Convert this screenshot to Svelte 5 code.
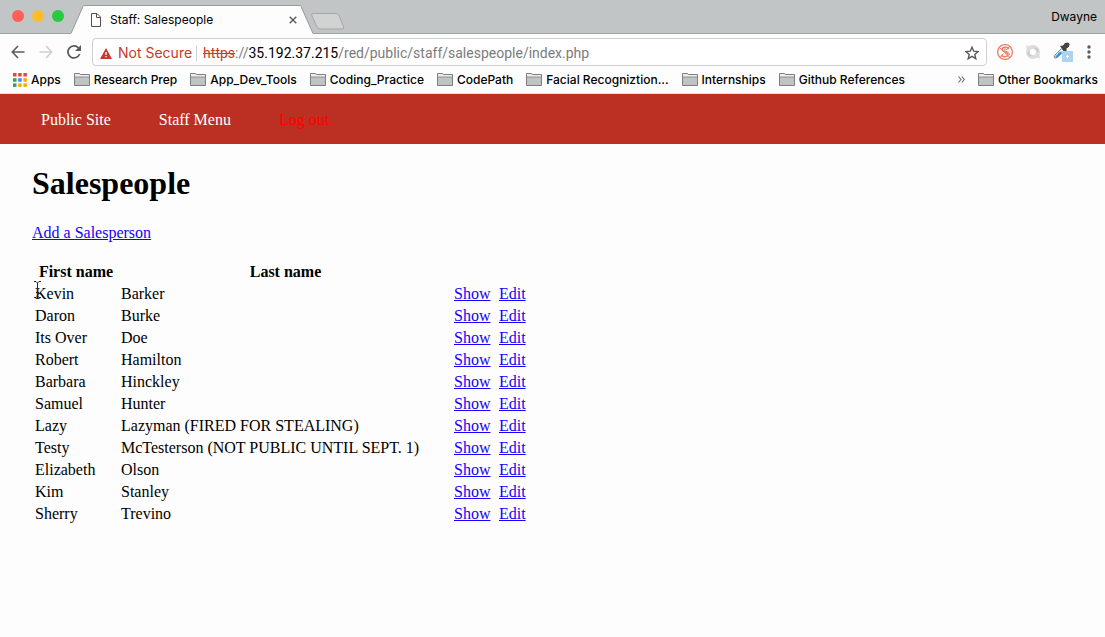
<script>
  const bookmarks = [
    'Research Prep',
    'App_Dev_Tools',
    'Coding_Practice',
    'CodePath',
    'Facial Recogniztion...',
    'Internships',
    'Github References',
  ];

  const people = [
    ['Kevin', 'Barker'],
    ['Daron', 'Burke'],
    ['Its Over', 'Doe'],
    ['Robert', 'Hamilton'],
    ['Barbara', 'Hinckley'],
    ['Samuel', 'Hunter'],
    ['Lazy', 'Lazyman (FIRED FOR STEALING)'],
    ['Testy', 'McTesterson (NOT PUBLIC UNTIL SEPT. 1)'],
    ['Elizabeth', 'Olson'],
    ['Kim', 'Stanley'],
    ['Sherry', 'Trevino'],
  ];

  const appColors = [
    '#e8453c', '#e8453c', '#e8453c',
    '#2fa35c', '#3f87f5', '#f5a90c',
    '#2fa35c', '#f5a90c', '#f5a90c',
  ];
</script>

{#snippet folder()}
  <svg class="folder" width="16" height="13" viewBox="0 0 16 13" aria-hidden="true">
    <path d="M.5 12.5V.5H5.5L6.5 1.5H15.5V12.5Z" fill="#c0c3c3" stroke="#7d7f7f" />
    <path d="M1 1.5H5.5M1 2.5H15" stroke="#ededed" />
    <path d="M1 4.5H15" stroke="#a5a8a8" />
  </svg>
{/snippet}

<div class="window">
  <header class="titlebar">
    <div class="lights">
      <button class="light close" aria-label="Close window"></button>
      <button class="light minimise" aria-label="Minimise window"></button>
      <button class="light expand" aria-label="Expand window"></button>
    </div>
    <div class="tab">
      <svg class="tab-shape" viewBox="0 0 244 29" preserveAspectRatio="none" aria-hidden="true">
        <path d="M0 28.5L12 1.5Q12.5 .5 14 .5H228Q229.5 .5 230 1.5L242 28.5V29H0Z" fill="#fdfdfd" />
        <path d="M0 28.5L12 1.5Q12.5 .5 14 .5H228Q229.5 .5 230 1.5L242 28.5" fill="none" stroke="#989a9a" />
      </svg>
      <svg width="10" height="14" viewBox="0 0 10 14" fill="none" stroke="#505050" aria-hidden="true">
        <path d="M.5 .5H6L9.5 4V13.5H.5ZM5.5 .5V4.5H9.5" />
      </svg>
      <span class="tab-title">Staff: Salespeople</span>
      <button class="plain" aria-label="Close tab">
        <svg width="8" height="8" viewBox="0 0 8 8" stroke="#555" stroke-width="1.3"><path d="M.7 .7 7.3 7.3M7.3 .7 .7 7.3" /></svg>
      </button>
    </div>
    <button class="plain new-tab" aria-label="New tab">
      <svg width="34" height="17" viewBox="0 0 34 17"><path d="M2 .5H25Q27 .5 28 2.5L32.5 13.5Q33.5 16 31 16H9Q7 16 6 14L.8 2.5Q0 .5 2 .5Z" fill="#d1d3d3" stroke="#a5a7a7" /></svg>
    </button>
    <button class="plain profile">Dwayne</button>
  </header>

  <div class="toolbar">
    <button class="plain" aria-label="Back">
      <svg width="14" height="14" viewBox="0 0 14 14" fill="none" stroke="#5a5a5a" stroke-width="1.6"><path d="M13.5 7H1.5M7 1 1.3 7 7 13" /></svg>
    </button>
    <button class="plain" aria-label="Forward">
      <svg width="14" height="14" viewBox="0 0 14 14" fill="none" stroke="#d0d0d0" stroke-width="1.6"><path d="M.5 7H12.5M7 1 12.7 7 7 13" /></svg>
    </button>
    <button class="plain" aria-label="Reload">
      <svg width="14" height="14" viewBox="0 0 14 14"><path d="M12.6 9A6 6 0 1 1 11.5 3" fill="none" stroke="#5a5a5a" stroke-width="1.7" /><path d="M14 0V6H8Z" fill="#5a5a5a" /></svg>
    </button>
    <div class="address">
      <svg width="12" height="11" viewBox="0 0 12 11" aria-hidden="true"><path d="M6 0 12 11H0Z" fill="#c53929" /><path d="M6 4V7M6 8V9.2" stroke="#fff" stroke-width="1.3" /></svg>
      <span class="warning">Not Secure</span>
      <span class="url"><s>https</s>://<b>35.192.37.215</b>/red/public/staff/salespeople/index.php</span>
      <button class="plain" aria-label="Bookmark this page">
        <svg width="14" height="14" viewBox="0 0 14 14"><path d="M7 1.2 8.7 5.2 13 5.6 9.8 8.4 10.8 12.7 7 10.4 3.2 12.7 4.2 8.4 1 5.6 5.3 5.2Z" fill="none" stroke="#5a5a5a" stroke-width="1.4" /></svg>
      </button>
    </div>
    <div class="extensions">
      <button class="plain" aria-label="Script blocker">
        <svg width="16" height="16" viewBox="0 0 16 16" fill="none" stroke="#ec8067"><circle cx="8" cy="8" r="7.4" stroke-width="1.3" /><path d="M11.8 5C11 2.8 5 2.5 5 5.2S11 8 11 10.5 6 13.5 4.2 11" stroke-width="1.5" /><path d="M9.8 5.5C9 4.5 7 4.5 7 5.7S13 8 12.5 11M2.5 3.5 13 13.5M12.5 2.5 9.5 6M6.5 9.5 3 13.5" stroke-width="1" /></svg>
      </button>
      <button class="plain" aria-label="Sync extension">
        <svg width="16" height="16" viewBox="0 0 16 16" fill="none"><circle cx="8" cy="8" r="5" stroke="#dcdcdc" stroke-width="4" /><path d="M1 1.5 2 7 6 3ZM15 14.5 14 9 10 13Z" fill="#dcdcdc" /><path d="M9.5 4Q13 4.5 12.5 8M6.5 12Q3 11.5 3.5 8" stroke="#c2c2c2" stroke-width="1.2" /></svg>
      </button>
      <button class="plain" aria-label="Color picker">
        <svg width="20" height="20" viewBox="0 0 20 20"><path d="M2 13 8.5 6.5 11 9 4.5 15.3Q2 17 1 15.5Z" fill="#d8eefb" stroke="#83919a" /><path d="M2 15 7 9.5 9 11 4 15.8Z" fill="#3194d8" /><path d="M7 4 10 3.5 12 1Q16 -.5 16.5 2 17 5 13.5 6.5L13.5 9.5 11.5 10Z" fill="#414345" /><rect x="9" y="9" width="11" height="11" fill="#aed3f1" /><path d="M14.5 13V16M13 14.5H16" stroke="#fff" /></svg>
      </button>
    </div>
    <button class="plain" aria-label="Browser menu">
      <svg width="4" height="14" viewBox="0 0 4 14" fill="#5a5a5a"><circle cx="2" cy="2" r="1.7" /><circle cx="2" cy="7" r="1.7" /><circle cx="2" cy="12" r="1.7" /></svg>
    </button>
  </div>

  <nav class="bookmarks" aria-label="Bookmarks">
    <button class="plain bookmark">
      <svg width="14" height="14" viewBox="0 0 14 14" aria-hidden="true">
        {#each appColors as color, i}
          <rect x={(i % 3) * 5.2} y={Math.floor(i / 3) * 5.2} width="3.5" height="3.5" fill={color} />
        {/each}
      </svg>
      Apps
    </button>
    {#each bookmarks as name}
      <button class="plain bookmark">{@render folder()}{name}</button>
    {/each}
    <button class="plain more" aria-label="More bookmarks">
      <svg width="7" height="7" viewBox="0 0 7 7" fill="none" stroke="#666" stroke-width="1.1"><path d="M.5 .5 3 3.5 .5 6.5M3.8 .5 6.3 3.5 3.8 6.5" /></svg>
    </button>
    <button class="plain bookmark">{@render folder()}Other Bookmarks</button>
  </nav>

  <nav class="site-nav" aria-label="Staff area">
    <a href="#public">Public Site</a>
    <a href="#menu">Staff Menu</a>
    <a class="logout" href="#logout">Log out</a>
  </nav>

  <main>
    <h1>Salespeople</h1>
    <a href="#new">Add a Salesperson</a>
    <table>
      <colgroup><col class="first" /><col class="last" /><col class="show" /><col class="edit" /></colgroup>
      <thead>
        <tr><th>First name</th><th>Last name</th><th></th><th></th></tr>
      </thead>
      <tbody>
        {#each people as [first, last]}
          <tr>
            <td>{first}</td>
            <td>{last}</td>
            <td><a href="#show">Show</a></td>
            <td><a href="#edit">Edit</a></td>
          </tr>
        {/each}
      </tbody>
    </table>
    <svg class="pointer" width="7" height="17" viewBox="0 0 7 17" fill="none" stroke="#222" aria-hidden="true"><path d="M0 .5H2L3.5 2 5 .5H7M3.5 2V15M0 16.5H2L3.5 15 5 16.5H7M2 11.5H5" /></svg>
  </main>
</div>

<style>
  :global(body) {
    margin: 0;
    background: #fdfdfd;
  }
  .window {
    min-height: 100vh;
    background: #fdfdfd;
    color: #000;
    font: 16px/18px "Liberation Serif", serif;
  }
  .plain {
    display: flex;
    align-items: center;
    padding: 0;
    border: 0;
    background: none;
    color: inherit;
    font: inherit;
    white-space: nowrap;
  }
  svg {
    display: block;
    flex: none;
  }
  .titlebar,
  .toolbar,
  .bookmarks {
    display: flex;
    box-sizing: border-box;
    font: 12px/16px Inter, sans-serif;
  }
  .titlebar {
    height: 34px;
    padding: 0 8px 0 12px;
    border-bottom: 1px solid #a0a2a2;
    background: #c1c5c5;
  }
  .lights {
    display: flex;
    gap: 8px;
    padding: 10px 2px 0 0;
  }
  .light {
    width: 12px;
    height: 12px;
    padding: 0;
    border: 0;
    border-radius: 50%;
  }
  .close { background: #ff5f57; }
  .minimise { background: #ffbd2e; }
  .expand { background: #28ca41; }
  .tab {
    position: relative;
    display: flex;
    align-items: center;
    box-sizing: border-box;
    width: 244px;
    height: 29px;
    margin: 5px 0 0 5px;
    padding: 0 18px 0 20px;
    gap: 9px;
  }
  .tab > :not(.tab-shape) {
    position: relative;
  }
  .tab > .tab-shape {
    position: absolute;
    inset: 0;
    width: 100%;
    height: 100%;
  }
  .tab-title {
    flex: 1;
  }
  .new-tab {
    align-self: flex-start;
    margin: 13px 0 0 -4px;
  }
  .profile {
    margin-left: auto;
  }
  .toolbar {
    align-items: center;
    gap: 14px;
    height: 36px;
    padding: 0 14px 0 11px;
  }
  .address {
    display: flex;
    flex: 1;
    align-items: center;
    box-sizing: border-box;
    height: 28px;
    margin: 0 -4px 0 -3px;
    padding: 2px 7px 0;
    border: 1px solid #cfcfcf;
    border-radius: 4px;
    background: #fff;
    font-size: 14px;
  }
  .warning {
    margin: 0 6px;
    padding-right: 4px;
    border-right: 1px solid #cfcfcf;
    color: #c53929;
  }
  .url {
    flex: 1;
    color: #7b7b7b;
    font-family: Roboto, sans-serif;
  }
  .url s { color: #c53929; }
  .url b {
    color: #000;
    font-weight: 400;
  }
  .extensions {
    display: flex;
    gap: 12px;
  }
  .bookmarks {
    align-items: center;
    gap: 13px;
    height: 24px;
    padding: 0 7px 4px 13px;
    border-bottom: 1px solid #dedede;
    font-weight: 500;
  }
  .bookmark {
    gap: 4px;
  }
  .more {
    margin-left: auto;
  }
  .site-nav {
    display: flex;
    align-items: center;
    gap: 48px;
    height: 50px;
    padding: 0 41px;
    background: #bb3022;
    line-height: 20px;
  }
  .site-nav a {
    padding-top: 2px;
    color: #fff;
    text-decoration: none;
  }
  .site-nav .logout { color: #f00; }
  main {
    position: relative;
    padding: 21px 32px;
  }
  main a { color: #1500ff; }
  h1 {
    margin: 0 0 22px;
    font-size: 32px;
    line-height: 37px;
  }
  table {
    width: 500px;
    margin-top: 18px;
    border-spacing: 2px;
    table-layout: fixed;
  }
  th,
  td {
    height: 18px;
    padding: 1px;
  }
  .first { width: 84px; }
  .last { width: 331px; }
  .show { width: 43px; }
  .pointer {
    position: absolute;
    top: 137px;
    left: 34px;
  }
</style>
